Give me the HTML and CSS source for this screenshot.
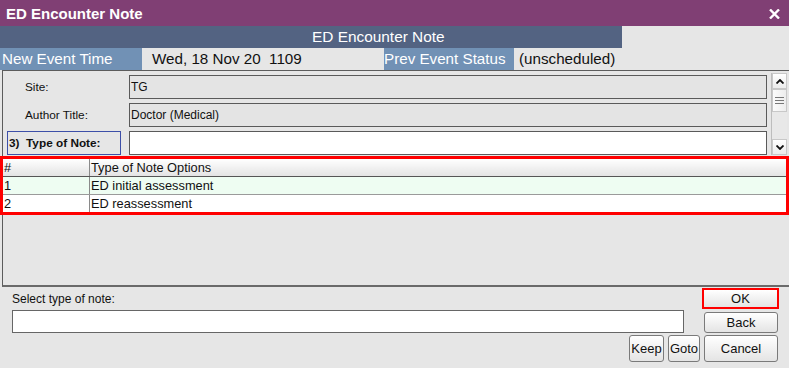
FILE: index.html
```html
<!DOCTYPE html>
<html lang="en">
<head>
    <meta charset="UTF-8">
    <title>ED Encounter Note</title>
    <link rel="stylesheet" href="styles.css">
</head>
<body>
    <div class="window">
        <div class="titlebar">
            <span class="title">ED Encounter Note</span>
            <svg class="close" width="11" height="10" viewBox="0 0 11 10">
                <path d="M1 0.5 L10 9.5 M10 0.5 L1 9.5" stroke="#fff" stroke-width="2.4"/>
            </svg>
        </div>

        <div class="header">
            <div class="header-title">ED Encounter Note</div>
        </div>

        <div class="event-row">
            <div class="event-label time-label">New Event Time</div>
            <div class="event-value time-value">Wed, 18 Nov 20&nbsp; 1109</div>
            <div class="event-label status-label">Prev Event Status</div>
            <div class="event-value status-value">(unscheduled)</div>
        </div>

        <div class="panel">
            <div class="fields-area">
                <div class="fields">
                    <div class="field-row">
                        <div class="field-label">Site:</div>
                        <div class="field-box">TG</div>
                    </div>
                    <div class="field-row">
                        <div class="field-label">Author Title:</div>
                        <div class="field-box">Doctor (Medical)</div>
                    </div>
                    <div class="field-row">
                        <div class="field-label focus-label">3)&nbsp; Type of Note:</div>
                        <div class="field-box field-input"></div>
                    </div>
                </div>

                <!-- vertical scrollbar -->
                <div class="scrollbar">
                    <div class="sb-btn">
                        <svg width="8" height="5" viewBox="0 0 8 5"><path d="M0.5 4.5 L4 1 L7.5 4.5" stroke="#111" stroke-width="1.8" fill="none"/></svg>
                    </div>
                    <div class="sb-thumb">
                        <svg width="9" height="7" viewBox="0 0 9 7"><path d="M0 0.5 H9 M0 3.5 H9 M0 6.5 H9" stroke="#777" stroke-width="1"/></svg>
                    </div>
                    <div class="sb-track"></div>
                    <div class="sb-btn">
                        <svg width="8" height="5" viewBox="0 0 8 5"><path d="M0.5 0.5 L4 4 L7.5 0.5" stroke="#111" stroke-width="1.8" fill="none"/></svg>
                    </div>
                </div>
            </div>

            <div class="options-wrap">
                <table class="options">
                    <thead>
                        <tr>
                            <th class="col-num">#</th>
                            <th>Type of Note Options</th>
                        </tr>
                    </thead>
                    <tbody>
                        <tr class="row-alt">
                            <td>1</td>
                            <td>ED initial assessment</td>
                        </tr>
                        <tr>
                            <td>2</td>
                            <td>ED reassessment</td>
                        </tr>
                    </tbody>
                </table>
            </div>
        </div>

        <div class="bottom">
            <div class="bottom-row row-a">
                <span class="select-label">Select type of note:</span>
                <button class="btn btn-ok">OK</button>
            </div>
            <div class="bottom-row row-b">
                <div class="select-input"></div>
                <button class="btn btn-back">Back</button>
            </div>
            <div class="bottom-row row-c">
                <button class="btn btn-keep">Keep</button>
                <button class="btn btn-goto">Goto</button>
                <button class="btn btn-cancel">Cancel</button>
            </div>
        </div>
    </div>
</body>
</html>
```

FILE: styles.css
```css
/* Dialog window */
body {
    margin: 0;
    font-family: "Liberation Sans", Arial, sans-serif;
    background-color: #e6e6e6;
    color: #111;
}

.window {
    width: 789px;
    height: 368px;
    overflow: hidden;
    background: #e6e6e6;
}

/* Title bar */
.titlebar {
    height: 26px;
    background-color: #803f74;
    display: flex;
    align-items: center;
    justify-content: space-between;
    padding: 0 9px 0 6px;
}

.title {
    color: #fff;
    font-weight: bold;
    font-size: 15px;
}

.close {
    margin-top: 1px;
}

/* Header strips */
.header {
    height: 22px;
    display: flex;
}

.header-title {
    width: 622px;
    box-sizing: border-box;
    padding-left: 312px;
    background-color: #536382;
    color: #fff;
    font-size: 15.4px;
    line-height: 22px;
}

.event-row {
    height: 22px;
    display: flex;
    font-size: 15.2px;
    line-height: 22px;
}

.event-label {
    background-color: #7191b5;
    color: #fff;
}

.time-label {
    width: 142px;
    padding-left: 2px;
    box-sizing: border-box;
}

.time-value {
    width: 242px;
    padding-left: 10px;
    box-sizing: border-box;
}

.status-label {
    width: 130px;
}

.status-value {
    padding-left: 5px;
}

/* Main panel */
.panel {
    height: 217px;
    box-sizing: border-box;
    margin-left: 2px;
    border-top: 1px solid #5c5c5c;
    border-left: 1px solid #5c5c5c;
    border-bottom: 2px solid #6a6a6a;
}

.fields-area {
    height: 85px;
    display: flex;
}

.fields {
    padding-top: 4px;
    display: flex;
    flex-direction: column;
    gap: 4px;
}

.field-row {
    display: flex;
    align-items: center;
    height: 24px;
}

.field-label {
    width: 126px;
    box-sizing: border-box;
    padding-left: 22px;
    font-size: 11.8px;
}

.focus-label {
    width: 114px;
    height: 24px;
    margin-left: 4px;
    margin-right: 8px;
    padding-left: 1px;
    border: 1px solid #3d4fa8;
    font-weight: bold;
    line-height: 22px;
}

.field-box {
    width: 638px;
    height: 24px;
    box-sizing: border-box;
    border: 1px solid #5a5a5a;
    background: #e4e4e4;
    padding-left: 1px;
    font-size: 12px;
    line-height: 22px;
}

.field-input {
    background: #fff;
}

/* Scrollbar */
.scrollbar {
    width: 16px;
    height: 82px;
    margin: 2px 0 0 4px;
    display: flex;
    flex-direction: column;
    border-left: 1px solid #bdbdbd;
    box-sizing: border-box;
}

.sb-btn {
    height: 16px;
    display: flex;
    align-items: center;
    justify-content: center;
    background: linear-gradient(#ffffff, #ececec);
    border: 1px solid #c8c8c8;
    box-sizing: border-box;
}

.sb-thumb {
    height: 23px;
    display: flex;
    align-items: center;
    justify-content: center;
    background: linear-gradient(90deg, #fbfbfb, #ededed);
    border: 1px solid #c8c8c8;
    box-sizing: border-box;
}

.sb-track {
    flex: 1;
    background: #e8e8e8;
}

/* Options table, highlighted */
.options-wrap {
    width: 789px;
    margin-left: -3px;
    box-sizing: border-box;
    border: 3px solid #ff0000;
    background: #fff;
}

.options {
    width: 100%;
    border-collapse: collapse;
    font-size: 12.8px;
}

.options th,
.options td {
    padding: 0 0 0 1px;
    text-align: left;
    font-weight: normal;
    white-space: nowrap;
}

.options th {
    height: 17px;
    background: linear-gradient(#ffffff, #e3e3e3);
    border-bottom: 1px solid #555;
}

.options td {
    height: 17px;
    border-bottom: 1px solid #9a9a9a;
}

.options tbody tr:last-child td {
    border-bottom: none;
}

.col-num {
    width: 85px;
}

.options th + th,
.options td + td {
    border-left: 1px solid #8a8a8a;
}

.row-alt {
    background: #eefdf2;
}

/* Bottom area */
.bottom {
    display: flex;
    flex-direction: column;
}

.bottom-row {
    display: flex;
    align-items: flex-start;
}

.row-a {
    height: 21px;
    margin-top: 1px;
}

.select-label {
    padding-left: 12px;
    margin-top: 4px;
    font-size: 12px;
}

.row-b {
    height: 23px;
    margin-top: 1px;
}

.select-input {
    width: 672px;
    height: 23px;
    margin-left: 12px;
    box-sizing: border-box;
    border: 1px solid #666;
    background: #fff;
}

.row-c {
    margin-top: 2px;
    justify-content: flex-end;
    gap: 4px;
    padding-right: 11px;
}

.btn {
    font-family: "Liberation Sans", Arial, sans-serif;
    font-size: 13px;
    color: #111;
    padding: 0;
    border: 1px solid #7a7a7a;
    border-radius: 3px;
    background: linear-gradient(#ffffff, #e4e4e4);
    box-sizing: border-box;
}

.btn-ok {
    width: 77px;
    height: 21px;
    margin-left: auto;
    margin-right: 10px;
    border: 2px solid #ff0000;
    border-radius: 0;
}

.btn-back {
    width: 74px;
    height: 21px;
    margin-left: auto;
    margin-top: 2px;
    margin-right: 11px;
}

.btn-keep {
    width: 35px;
    height: 27px;
}

.btn-goto {
    width: 32px;
    height: 27px;
}

.btn-cancel {
    width: 74px;
    height: 27px;
}
```
